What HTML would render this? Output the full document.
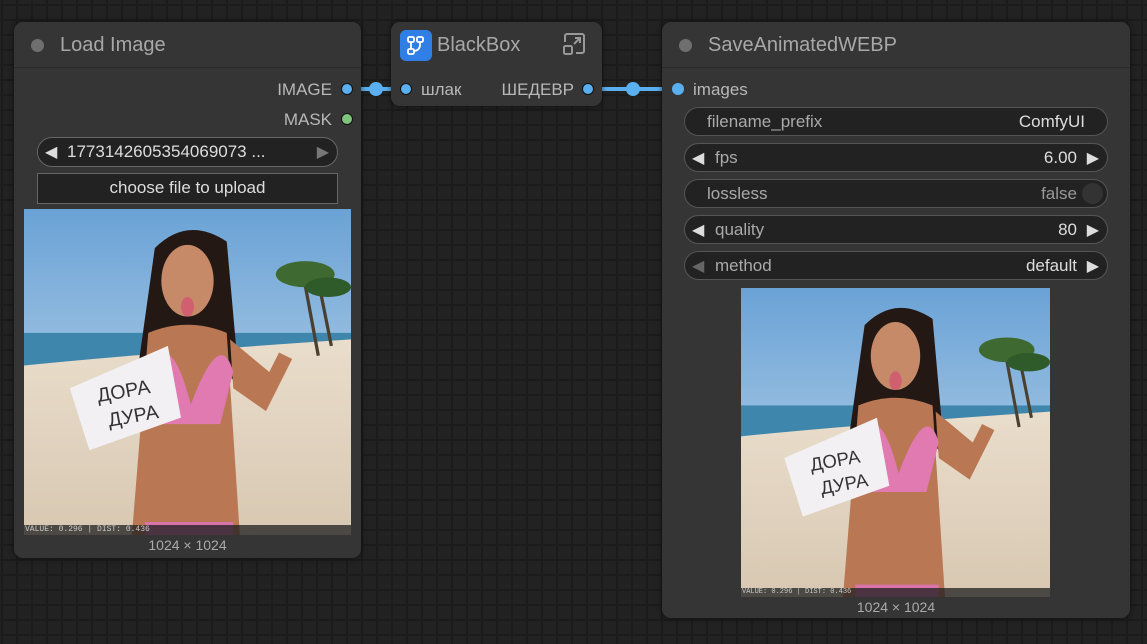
<!DOCTYPE html>
<html><head><meta charset="utf-8"><style>
*{margin:0;padding:0;box-sizing:border-box}
body{width:1147px;height:644px;overflow:hidden;position:relative;font-family:"Liberation Sans","DejaVu Sans",sans-serif;
background-color:#222;
background-image:linear-gradient(#1b1b1b 2px,transparent 2px),linear-gradient(90deg,#1b1b1b 2px,transparent 2px);
background-size:15px 15px;background-position:1px 4px}
.node{position:absolute;background:#353535;border-radius:9px;box-shadow:0 0 6px rgba(0,0,0,.6)}
.title{position:absolute;left:0;right:0;top:0;height:46px;border-bottom:1px solid #2a2a2a}
.tdot{position:absolute;width:13px;height:13px;border-radius:50%;background:#6f6f6f;top:17px}
.ttext{position:absolute;top:12px;font-size:20px;color:#a8a8a8}
.lbl{position:absolute;font-size:17px;color:#b8b8b8}
.dot{position:absolute;width:12px;height:12px;border-radius:50%;border:1.5px solid #111}
.w{position:absolute;left:22px;right:22px;height:29px;border-radius:15px;background:#222;border:1.5px solid #555;font-size:17px;color:#aaa}
.w span{position:absolute;top:4px}
.w .v{color:#ddd}
.arr{position:absolute;top:3px;color:#ddd;font-size:16px}
.img{position:absolute;overflow:hidden}
.cap{position:absolute;font-size:14px;color:#aaa;text-align:center}
.vs{position:absolute;left:0;right:0;bottom:0;height:10px;background:rgba(30,30,30,.75);font-family:"Liberation Mono",monospace;font-size:8px;color:#ccc;line-height:10px;padding-left:1px}
</style></head><body>

<svg style="position:absolute;left:0;top:0" width="1147" height="644">
<line x1="347" y1="89" x2="406" y2="89" stroke="#5aaff0" stroke-width="4"/>
<circle cx="376" cy="89" r="7" fill="#5aaff0"/>
<line x1="588" y1="89" x2="678" y2="89" stroke="#5aaff0" stroke-width="4"/>
<circle cx="633" cy="89" r="7" fill="#5aaff0"/>
</svg>

<!-- Load Image -->
<div class="node" style="left:14px;top:22px;width:347px;height:536px">
 <div class="title"><div class="tdot" style="left:17px"></div><div class="ttext" style="left:46px">Load Image</div></div>
 <div class="lbl" style="right:29px;top:58px">IMAGE</div>
 <div class="dot" style="right:8px;top:61px;background:#5aaff0"></div>
 <div class="lbl" style="right:29px;top:88px">MASK</div>
 <div class="dot" style="right:8px;top:91px;background:#7ec47e"></div>
 <div class="w" style="left:23px;right:23px;top:115px;height:30px;border-color:#666">
  <span class="arr" style="left:7px;color:#ddd">◀</span>
  <span class="v" style="left:29px;top:4px">1773142605354069073 ...</span>
  <span class="arr" style="right:8px;color:#777">▶</span>
 </div>
 <div style="position:absolute;left:23px;right:23px;top:151px;height:31px;background:#222;border:1.5px solid #666;color:#ddd;font-size:17px;text-align:center;line-height:28px">choose file to upload</div>
 <div class="img" style="left:10px;top:187px;width:327px;height:326px">
  <svg width="327" height="326" viewBox="0 0 100 100" preserveAspectRatio="none"><use href="#scene"/></svg>
  <div class="vs">VALUE: 0.296 | DIST: 0.436</div>
 </div>
 <div class="cap" style="left:0;right:0;top:515px">1024 × 1024</div>
</div>

<!-- BlackBox -->
<div class="node" style="left:391px;top:22px;width:211px;height:84px">
 <div class="title" style="border:none"></div>
 <div style="position:absolute;left:9px;top:8px;width:32px;height:31px;border-radius:6px;background:#2f7fe6">
  <svg width="32" height="31" viewBox="0 0 32 31" fill="none" stroke="#fff" stroke-width="1.8"><rect x="8" y="7" width="6" height="5" rx="1.5"/><rect x="17" y="7" width="6" height="5" rx="1.5"/><rect x="8" y="19" width="6" height="5" rx="1.5"/><path d="M11 12v7M20 12v3a6 6 0 0 1-6 6"/></svg>
 </div>
 <div class="ttext" style="left:46px;top:12px">BlackBox</div>
 <svg style="position:absolute;left:170px;top:9px" width="27" height="27" viewBox="0 0 27 27" fill="none" stroke="#999" stroke-width="2"><path d="M4 11V5a2 2 0 0 1 2-2h15a2 2 0 0 1 2 2v15a2 2 0 0 1-2 2h-6"/><rect x="3" y="15" width="8" height="8" rx="1.5"/><path d="M13 13l6-6M14 7h5v5"/></svg>
 <div class="dot" style="left:9px;top:61px;background:#5aaff0"></div>
 <div class="lbl" style="left:30px;top:58px">шлак</div>
 <div class="lbl" style="right:28px;top:58px">ШЕДЕВР</div>
 <div class="dot" style="right:8px;top:61px;background:#5aaff0"></div>
</div>

<!-- SaveAnimatedWEBP -->
<div class="node" style="left:662px;top:22px;width:468px;height:596px">
 <div class="title"><div class="tdot" style="left:17px"></div><div class="ttext" style="left:46px">SaveAnimatedWEBP</div></div>
 <div class="dot" style="left:10px;top:61px;background:#5aaff0;border:none"></div>
 <div class="lbl" style="left:31px;top:58px">images</div>
 <div class="w" style="top:85px"><span style="left:22px">filename_prefix</span><span class="v" style="right:22px">ComfyUI</span></div>
 <div class="w" style="top:121px"><span class="arr" style="left:7px">◀</span><span style="left:30px">fps</span><span class="v" style="right:30px">6.00</span><span class="arr" style="right:8px">▶</span></div>
 <div class="w" style="top:157px"><span style="left:22px">lossless</span><span style="right:30px;color:#999">false</span><div style="position:absolute;right:4px;top:3px;width:21px;height:21px;border-radius:50%;background:#333"></div></div>
 <div class="w" style="top:193px"><span class="arr" style="left:7px">◀</span><span style="left:30px">quality</span><span class="v" style="right:30px">80</span><span class="arr" style="right:8px">▶</span></div>
 <div class="w" style="top:229px"><span class="arr" style="left:7px;color:#666">◀</span><span style="left:30px">method</span><span class="v" style="right:30px">default</span><span class="arr" style="right:8px">▶</span></div>
 <div class="img" style="left:79px;top:266px;width:309px;height:309px">
  <svg width="309" height="309" viewBox="0 0 100 100" preserveAspectRatio="none"><use href="#scene"/></svg>
  <div class="vs" style="height:9px;font-size:7px;line-height:9px">VALUE: 0.296 | DIST: 0.436</div>
 </div>
 <div class="cap" style="left:0;right:0;top:577px">1024 × 1024</div>
</div>

<svg width="0" height="0" style="position:absolute"><defs>
<linearGradient id="sky" x1="0" y1="0" x2="0" y2="1"><stop offset="0" stop-color="#6aa2d6"/><stop offset="1" stop-color="#cfe1ee"/></linearGradient>
<linearGradient id="sand" x1="0" y1="0" x2="0" y2="1"><stop offset="0" stop-color="#e9ddcb"/><stop offset="1" stop-color="#d8c8b2"/></linearGradient>
<g id="scene">
 <rect width="100" height="100" fill="url(#sky)"/>
 <rect y="38" width="100" height="12" fill="#3f86ad"/>
 <path d="M0 48 Q40 44 100 40 V100 H0Z" fill="url(#sand)"/>
 <path d="M85 18 L90 45 M90 22 L94 42" stroke="#4a4030" stroke-width="1"/>
 <ellipse cx="86" cy="20" rx="9" ry="4" fill="#3e6a32"/><ellipse cx="93" cy="24" rx="7" ry="3" fill="#2f5a2a"/>
 <path d="M40 12 Q50 2 62 10 L66 55 L58 45 L42 45 L34 55Z" fill="#241814"/>
 <ellipse cx="50" cy="22" rx="8" ry="11" fill="#c68a68"/>
 <ellipse cx="50" cy="30" rx="2" ry="3" fill="#d06070"/>
 <path d="M38 38 Q50 33 62 38 L66 100 H33Z" fill="#b97853"/>
 <path d="M63 40 L75 50 L78 44 L82 46 L74 62 L64 55Z" fill="#b97853"/>
 <path d="M38 48 Q45 36 51 60 Q60 36 64 50 L60 66 H40Z" fill="#e07ab0"/>
 <path d="M37 96 H64 V100 H37Z" fill="#d874aa"/>
 <path d="M14 55 L44 42 L48 64 L20 74Z" fill="#f2f0f2"/>
 <text x="23" y="58" font-size="6" fill="#333" transform="rotate(-10 30 60)" font-family="Liberation Sans,sans-serif">ДОРА</text>
 <text x="25" y="66" font-size="6" fill="#333" transform="rotate(-10 30 60)" font-family="Liberation Sans,sans-serif">ДУРА</text>
</g></defs></svg>
</body></html>
